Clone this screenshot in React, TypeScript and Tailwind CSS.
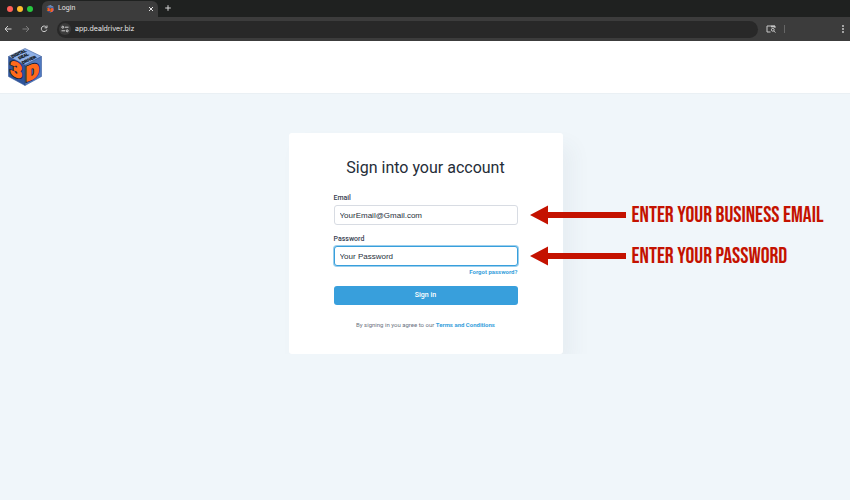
import type { ReactNode } from "react";

type LogoProps = {
  className: string;
};

const Logo = ({ className }: LogoProps) => (
  <svg viewBox="0 0 34 38" className={className} aria-hidden="true">
    <path d="M17 0.5 L33.5 8.5 L17 17 L0.5 8.5 Z" fill="#8fb0e6" />
    <path d="M0.5 8.5 L17 17 V37.5 L0.5 28.5 Z" fill="#2f549b" />
    <path d="M33.5 8.5 L17 17 V37.5 L33.5 28.5 Z" fill="#5079c0" />
    <path d="M17 17 V37.5 M17 17 L0.5 8.5 M17 17 L33.5 8.5" stroke="#24427c" strokeWidth="0.6" />
    <path
      d="M17 0.5 L33.5 8.5 V28.5 L17 37.5 L0.5 28.5 V8.5 Z"
      fill="none"
      stroke="#3a5c9c"
      strokeWidth="0.6"
    />
    <g
      fill="#121a26"
      stroke="#121a26"
      strokeWidth="0.3"
      className="font-['Liberation_Sans',sans-serif] text-[4px] font-bold"
    >
      <text transform="matrix(0.9 -0.42 0.6 0.8 4.5 10)">DIGITAL</text>
      <text transform="matrix(0.9 -0.42 0.6 0.8 11.5 11.5)">DEAL</text>
      <text transform="matrix(0.9 -0.42 0.6 0.8 15 16)">DRIVER</text>
    </g>
    <g
      fill="#ff6a1c"
      stroke="#14213d"
      strokeWidth="3"
      paintOrder="stroke"
      className="font-[Roboto,sans-serif] text-[20px] font-black"
    >
      <text transform="matrix(1 0.4 0 1 2.5 26.5)">3</text>
      <text transform="matrix(1 -0.4 0 1 18 33.5)">D</text>
    </g>
    <g
      fill="#ff6a1c"
      stroke="#ff6a1c"
      strokeWidth="1.4"
      className="font-[Roboto,sans-serif] text-[20px] font-black"
    >
      <text transform="matrix(1 0.4 0 1 2.5 26.5)">3</text>
      <text transform="matrix(1 -0.4 0 1 18 33.5)">D</text>
    </g>
  </svg>
);

const TabStrip = () => (
  <div className="flex h-[17px] items-end bg-[#1f2120] pl-[7px]">
    <div className="flex h-4 items-center gap-1">
      <span className="size-[6px] rounded-full bg-[#ff5f57]" />
      <span className="size-[6px] rounded-full bg-[#febc2e]" />
      <span className="size-[6px] rounded-full bg-[#28c840]" />
    </div>
    <div className="ml-[9px] flex h-4 w-[116px] items-center rounded-t-md bg-[#3c3c3c] px-1 pb-px text-[7px] text-[#e3e3e3]">
      <Logo className="h-2 w-2" />
      <span className="ml-1 flex-1">Login</span>
      <button type="button" aria-label="Close tab">
        <svg viewBox="0 0 6 6" className="size-[6px]" stroke="#e3e3e3">
          <path d="M1 1 L5 5 M5 1 L1 5" />
        </svg>
      </button>
    </div>
    <button type="button" aria-label="New tab" className="flex h-4 items-center pb-[2px] pl-[6px]">
      <svg viewBox="0 0 8 8" className="size-2" stroke="#d5d5d5">
        <path d="M4 1.2 V6.8 M1.2 4 H6.8" />
      </svg>
    </button>
  </div>
);

const Toolbar = () => (
  <div className="flex h-6 items-center bg-[#3c3c3c] px-1">
    <button type="button" aria-label="Back">
      <svg viewBox="0 0 8 8" className="size-2" fill="none" stroke="#d0d0d0">
        <path d="M7.5 4 H1.5 M4 1 L1 4 L4 7" />
      </svg>
    </button>
    <button type="button" aria-label="Forward" className="ml-[10px]">
      <svg viewBox="0 0 8 8" className="size-2" fill="none" stroke="#7d7d7d">
        <path d="M0.5 4 H6.5 M4 1 L7 4 L4 7" />
      </svg>
    </button>
    <button type="button" aria-label="Reload" className="ml-[10px]">
      <svg viewBox="0 0 8 8" className="size-2" fill="none" stroke="#d0d0d0">
        <path d="M6.4 2.2 A2.8 2.8 0 1 0 6.8 4.6 M7 0.5 V2.8 H4.6" />
      </svg>
    </button>
    <div className="ml-[9px] flex h-[17px] flex-1 items-center rounded-full bg-[#282828] px-[2px]">
      <span className="flex size-3 items-center justify-center rounded-full bg-[#3c3c3c]">
        <svg viewBox="0 0 8 8" className="size-2" fill="none" stroke="#d0d0d0">
          <circle cx="1.8" cy="2.2" r="1" />
          <path d="M4 2.2 H7.5 M0.5 5.8 H4" />
          <circle cx="6.2" cy="5.8" r="1" />
        </svg>
      </span>
      <input
        type="text"
        aria-label="Address"
        defaultValue="app.dealdriver.biz"
        className="ml-1 flex-1 bg-transparent font-[Inter,sans-serif] text-[7px] text-[#e6e6e6] outline-none"
      />
    </div>
    <button type="button" aria-label="Search this page" className="ml-2">
      <svg viewBox="0 0 10 8" className="h-2 w-[10px]" fill="none" stroke="#c8c8c8">
        <path d="M4.5 7 H1 V1 H9 V3" />
        <path d="M5 1.5 H9" strokeWidth="1.6" />
        <circle cx="6.8" cy="4.8" r="1.4" />
        <path d="M7.8 6 L9.4 7.6" />
      </svg>
    </button>
    <span className="ml-2 h-2 w-px bg-[#666]" />
    <button type="button" aria-label="Menu" className="ml-14 pr-px">
      <svg viewBox="0 0 4 8" className="h-2 w-1" fill="#d5d5d5">
        <circle cx="2" cy="1" r="0.9" />
        <circle cx="2" cy="4" r="0.9" />
        <circle cx="2" cy="7" r="0.9" />
      </svg>
    </button>
  </div>
);

type CalloutProps = {
  children: ReactNode;
};

const Callout = ({ children }: CalloutProps) => (
  <div className="absolute top-0 left-full ml-3 flex h-5 items-center gap-[6px] whitespace-nowrap">
    <svg viewBox="0 0 96 20" className="h-5 w-24" fill="#c41200">
      <path d="M0 10 L18 0.5 V7 H96 V13 H18 V19.5 Z" />
    </svg>
    <span className="pt-[2px] font-['Bebas_Neue','Roboto_Condensed','Liberation_Sans_Narrow',sans-serif] text-[22px] leading-5 text-[#c41200]">
      {children}
    </span>
  </div>
);

type FieldProps = {
  id: string;
  label: string;
  value: string;
  hint: string;
  focused?: boolean;
};

const Field = ({ id, label, value, hint, focused }: FieldProps) => (
  <div>
    <label htmlFor={id} className="block text-[7px] leading-[10px] font-medium text-[#374151]">
      {label}
    </label>
    <div className="relative mt-[2px]">
      <input
        id={id}
        type="text"
        defaultValue={value}
        className={`block h-5 w-full rounded-[3px] border bg-white px-[5px] font-['Liberation_Sans',sans-serif] text-[8px] text-[#27303b] outline-none ${
          focused ? "border-[#389fdc] ring-1 ring-[#389fdc]/50" : "border-[#d8dce3]"
        }`}
      />
      <Callout>{hint}</Callout>
    </div>
  </div>
);

const App = () => (
  <div className="min-h-screen overflow-x-hidden bg-[#f0f6fa] font-[Roboto,sans-serif]">
    <TabStrip />
    <Toolbar />
    <header className="border-b border-[#eaf0f4] bg-white px-2 py-[7px]">
      <a href="/" aria-label="Home" className="block w-[34px]">
        <Logo className="h-[38px] w-[34px]" />
      </a>
    </header>
    <main className="flex justify-center overflow-hidden pt-[39px] pl-px">
      <form className="w-full max-w-[274px] rounded-[3px] bg-white px-[45px] pt-[25px] pb-[25px] shadow-[10px_12px_20px_rgba(60,80,100,0.05)]">
        <h1 className="text-center text-[16px] leading-5 whitespace-nowrap text-[#252d38]">
          Sign into your account
        </h1>
        <div className="mt-[15px] flex flex-col gap-[9px]">
          <Field id="email" label="Email" value="YourEmail@Gmail.com" hint="ENTER YOUR BUSINESS EMAIL" />
          <Field id="password" label="Password" value="Your Password" hint="ENTER YOUR PASSWORD" focused />
        </div>
        <div className="mt-[2px] text-right text-[6px] leading-[8px]">
          <a href="#forgot" className="font-bold text-[#389fdc]">
            Forgot password?
          </a>
        </div>
        <button
          type="button"
          className="mt-[10px] block h-[19px] w-full rounded-[3px] bg-[#389fdc] text-[7px] font-medium text-white"
        >
          Sign in
        </button>
        <p className="mt-4 text-center text-[6px] leading-[8px] text-[#6b7280]">
          By signing in you agree to our{" "}
          <a href="#terms" className="font-bold text-[#389fdc]">
            Terms and Conditions
          </a>
        </p>
      </form>
    </main>
  </div>
);

export default App;
